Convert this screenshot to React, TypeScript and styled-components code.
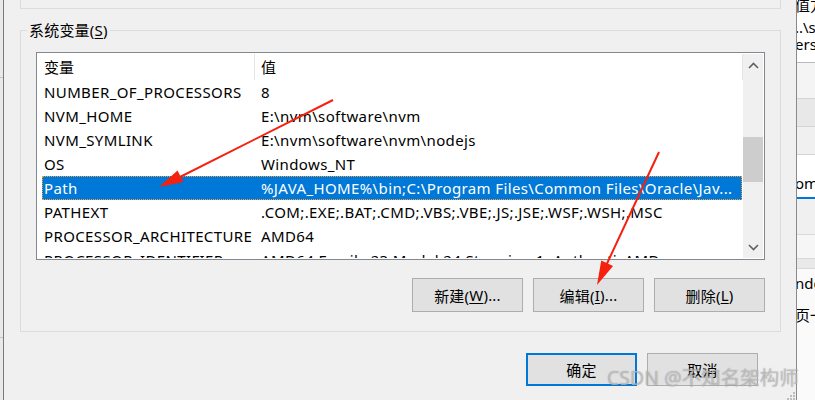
import React from "react";
import styled, { createGlobalStyle } from "styled-components";

const Global = createGlobalStyle`
  html, body { margin: 0; padding: 0; background: #f0f0f0; overflow: hidden; }
  body { font-family: "Noto Sans", "Noto Sans CJK SC", sans-serif; }
  #root { width: 815px; height: 400px; }
`;

const FONT = `"Noto Sans", "Noto Sans CJK SC", sans-serif`;

const Screen = styled.div`
  position: relative;
  width: 815px;
  height: 400px;
  overflow: hidden;
  display: flex;
  font-family: ${FONT};
  font-size: 15px;
  color: #000;
  background: #f0f0f0;
`;

/* ---------- window behind, left edge ---------- */
const BackLeft = styled.div`
  width: 3px;
  flex: none;
  background: #e9e9e9;
  display: flex;
  flex-direction: column;
`;
const BackLeftCell = styled.div<{ $h: number }>`
  flex: none;
  height: ${(p) => p.$h}px;
  border-bottom: 1px solid #c4c4c4;
`;

/* ---------- dialog ---------- */
const Dialog = styled.div`
  width: 794px;
  flex: none;
  box-sizing: border-box;
  border-left: 1px solid #7a7a7a;
  border-right: 1px solid #8a8a8a;
  background: #f0f0f0;
  display: flex;
  flex-direction: column;
  position: relative;
`;

const UserGroupTail = styled.div`
  flex: none;
  height: 9px;
  box-sizing: border-box;
  margin: 0 15px 0 16px;
  border: 1px solid #dcdcdc;
  border-top: none;
`;

const Group = styled.fieldset`
  margin: 12px 15px 0 16px;
  padding: 0 15px 19px;
  border: 1px solid #dcdcdc;
  min-width: 0;
`;

const Legend = styled.legend`
  margin-left: -9px;
  padding: 0 2px;
  line-height: 19px;
  font-size: 15px;
  letter-spacing: 0.2px;
`;

const Key = styled.span`
  text-decoration: underline;
  text-underline-offset: 2px;
`;

const ListBox = styled.div`
  margin-top: 12px;
  height: 208px;
  box-sizing: border-box;
  border: 1px solid #828790;
  padding: 1px;
  background: #fff;
  display: flex;
`;

const ListMain = styled.div`
  flex: 1;
  min-width: 0;
  overflow: hidden;
  display: flex;
  flex-direction: column;
  letter-spacing: 0.38px;
`;

const HeaderRow = styled.div`
  flex: none;
  display: flex;
  height: 26px;
`;

const HeaderCell = styled.div<{ $w: number }>`
  flex: none;
  width: ${(p) => p.$w}px;
  box-sizing: border-box;
  border-right: 1px solid #e5e5e5;
  padding-left: 6px;
  line-height: 26px;
  white-space: nowrap;
  letter-spacing: 0;
`;

const Row = styled.div<{ $sel?: boolean }>`
  flex: none;
  display: flex;
  height: 24px;
  width: 700px;
  margin-left: 4px;
  line-height: 24px;
  white-space: nowrap;
  background: ${(p) => (p.$sel ? "#0078d7" : "transparent")};
  color: ${(p) => (p.$sel ? "#fff" : "#000")};
  outline: ${(p) => (p.$sel ? "1px dotted #f5a03c" : "none")};
  outline-offset: -1px;
`;

const NameCell = styled.div`
  flex: none;
  width: 212px;
  box-sizing: border-box;
  padding-left: 2px;
  overflow: hidden;
`;

const ValueCell = styled.div`
  flex: 1;
  min-width: 0;
  padding-left: 7px;
  overflow: hidden;
`;

const ScrollBar = styled.div`
  width: 20px;
  flex: none;
  background: #f0f0f0;
  display: flex;
  flex-direction: column;
`;

const ScrollBtn = styled.div`
  flex: none;
  height: 22px;
  display: flex;
  align-items: center;
  justify-content: center;
`;

const Track = styled.div`
  flex: 1;
  display: flex;
  flex-direction: column;
`;

const Thumb = styled.div<{ $top: number; $h: number }>`
  flex: none;
  margin-top: ${(p) => p.$top}px;
  height: ${(p) => p.$h}px;
  background: #cdcdcd;
`;

const ButtonRow = styled.div`
  display: flex;
  justify-content: flex-end;
  gap: 10px;
  margin-top: 18px;
`;

const Button = styled.button<{ $primary?: boolean; $h?: number }>`
  width: 111px;
  height: ${(p) => p.$h ?? 34}px;
  box-sizing: border-box;
  padding: 0;
  margin: 0;
  background: #e1e1e1;
  border: ${(p) => (p.$primary ? "2px solid #0078d7" : "1px solid #adadad")};
  font-family: ${FONT};
  font-size: 15px;
  letter-spacing: 0.2px;
  color: #000;
  display: flex;
  align-items: center;
  justify-content: center;
`;

const Footer = styled.div`
  display: flex;
  justify-content: flex-end;
  gap: 10px;
  margin-top: 21px;
  padding-right: 38px;
`;

const Grip = styled.svg`
  position: absolute;
  right: 1px;
  bottom: 0;
`;

/* ---------- window behind, right edge ---------- */
const BackRight = styled.div`
  width: 18px;
  flex: none;
  display: flex;
  flex-direction: column;
  overflow: hidden;
  box-shadow: inset 5px 0 5px -3px rgba(0, 0, 0, 0.18);
  background: #f7f7f7;
`;

const BackBlock = styled.div<{ $h: number; $bg: string; $line?: string; $bottom?: string }>`
  flex: none;
  height: ${(p) => p.$h}px;
  box-sizing: border-box;
  background: ${(p) => p.$bg};
  border-top: ${(p) => (p.$line ? `1px solid ${p.$line}` : "none")};
  border-bottom: ${(p) => (p.$bottom ? p.$bottom : "none")};
  display: flex;
  flex-direction: column;
  white-space: nowrap;
  font-size: 15px;
  line-height: 15px;
  overflow: hidden;
`;

const BackText = styled.div<{ $mt: number }>`
  margin-top: ${(p) => p.$mt}px;
  margin-left: -2px;
`;

/* ---------- overlays ---------- */
const Annotations = styled.svg`
  position: absolute;
  left: 0;
  top: 0;
  pointer-events: none;
`;

const Watermark = styled.div`
  position: absolute;
  left: 607px;
  top: 366px;
  font-family: ${FONT};
  font-size: 19.5px;
  line-height: 24px;
  white-space: nowrap;
  color: rgba(255, 255, 255, 0.45);
  text-shadow: 0 0 1px rgba(90, 90, 90, 0.75);
  pointer-events: none;
`;

const rows: [string, string][] = [
  ["NUMBER_OF_PROCESSORS", "8"],
  ["NVM_HOME", "E:\\nvm\\software\\nvm"],
  ["NVM_SYMLINK", "E:\\nvm\\software\\nvm\\nodejs"],
  ["OS", "Windows_NT"],
  ["Path", "%JAVA_HOME%\\bin;C:\\Program Files\\Common Files\\Oracle\\Jav..."],
  ["PATHEXT", ".COM;.EXE;.BAT;.CMD;.VBS;.VBE;.JS;.JSE;.WSF;.WSH;.MSC"],
  ["PROCESSOR_ARCHITECTURE", "AMD64"],
  ["PROCESSOR_IDENTIFIER", "AMD64 Family 23 Model 24 Stepping 1, AuthenticAMD"],
];

const Chevron = ({ up }: { up?: boolean }) => (
  <svg width="11" height="7" viewBox="0 0 11 7">
    <polyline
      points={up ? "1,6 5.5,1.5 10,6" : "1,1 5.5,5.5 10,1"}
      fill="none"
      stroke="#606060"
      strokeWidth="1.6"
    />
  </svg>
);

function arrowHead(x1: number, y1: number, tx: number, ty: number, len = 24, half = 6.5) {
  const dx = tx - x1;
  const dy = ty - y1;
  const l = Math.hypot(dx, dy);
  const ux = dx / l;
  const uy = dy / l;
  const bx = tx - ux * len;
  const by = ty - uy * len;
  const px = -uy;
  const py = ux;
  return `${tx},${ty} ${bx + px * half},${by + py * half} ${bx - px * half},${by - py * half}`;
}

export default function App() {
  return (
    <>
      <Global />
      <Screen>
        <BackLeft>
          <BackLeftCell $h={77} />
          <BackLeftCell $h={259} />
        </BackLeft>

        <Dialog>
          <UserGroupTail />
          <Group>
            <Legend>
              系统变量(<Key>S</Key>)
            </Legend>
            <ListBox>
              <ListMain>
                <HeaderRow>
                  <HeaderCell $w={217}>变量</HeaderCell>
                  <HeaderCell $w={488}>值</HeaderCell>
                </HeaderRow>
                {rows.map(([n, v]) => (
                  <Row key={n} $sel={n === "Path"}>
                    <NameCell>{n}</NameCell>
                    <ValueCell>{v}</ValueCell>
                  </Row>
                ))}
              </ListMain>
              <ScrollBar>
                <ScrollBtn>
                  <Chevron up />
                </ScrollBtn>
                <Track>
                  <Thumb $top={61} $h={45} />
                </Track>
                <ScrollBtn>
                  <Chevron />
                </ScrollBtn>
              </ScrollBar>
            </ListBox>
            <ButtonRow>
              <Button>
                新建(<Key>W</Key>)...
              </Button>
              <Button>
                编辑(<Key>I</Key>)...
              </Button>
              <Button>
                删除(<Key>L</Key>)
              </Button>
            </ButtonRow>
          </Group>
          <Footer>
            <Button $primary $h={33}>确定</Button>
            <Button $h={33}>取消</Button>
          </Footer>
          <Grip width="8" height="8" viewBox="0 0 8 8">
            <rect x="6" y="0" width="2" height="2" fill="#bdbdbd" />
            <rect x="3" y="3" width="2" height="2" fill="#bdbdbd" />
            <rect x="6" y="3" width="2" height="2" fill="#bdbdbd" />
            <rect x="0" y="6" width="2" height="2" fill="#bdbdbd" />
            <rect x="3" y="6" width="2" height="2" fill="#bdbdbd" />
            <rect x="6" y="6" width="2" height="2" fill="#bdbdbd" />
          </Grip>
        </Dialog>

        <BackRight>
          <BackBlock $h={62} $bg="#ffffff">
            <BackText $mt={-2}>值方</BackText>
            <BackText $mt={7}>..\s</BackText>
            <BackText $mt={2}>ers'</BackText>
          </BackBlock>
          <BackBlock $h={36} $bg="#f4f4f4" $line="#b9b9b9" />
          <BackBlock $h={28} $bg="#e8e8e8" $line="#d4d4d4" />
          <BackBlock $h={28} $bg="#f0f0f0" $line="#d4d4d4" />
          <BackBlock $h={45} $bg="#ffffff" $line="#d4d4d4" $bottom="2px solid #0078d7">
            <BackText $mt={21}>ome</BackText>
          </BackBlock>
          <BackBlock $h={35} $bg="#f0f0f0" />
          <BackBlock $h={24} $bg="#f6f6f6" $line="#d9d9d9" />
          <BackBlock $h={10} $bg="#e9e9e9" $line="#d9d9d9" />
          <BackBlock $h={132} $bg="#fafafa" $line="#d9d9d9">
            <BackText $mt={7}>ndo</BackText>
            <BackText $mt={17}>页一</BackText>
          </BackBlock>
        </BackRight>

        <Annotations width="815" height="400" viewBox="0 0 815 400">
          <line x1="333" y1="100" x2="176" y2="179" stroke="#f5200e" strokeWidth="2" />
          <polygon points={arrowHead(333, 100, 159, 187)} fill="#f5200e" />
          <line x1="659" y1="152" x2="604" y2="270" stroke="#f5200e" strokeWidth="2" />
          <polygon points={arrowHead(659, 152, 597, 285)} fill="#f5200e" />
        </Annotations>

        <Watermark>CSDN @不知名架构师</Watermark>
      </Screen>
    </>
  );
}
